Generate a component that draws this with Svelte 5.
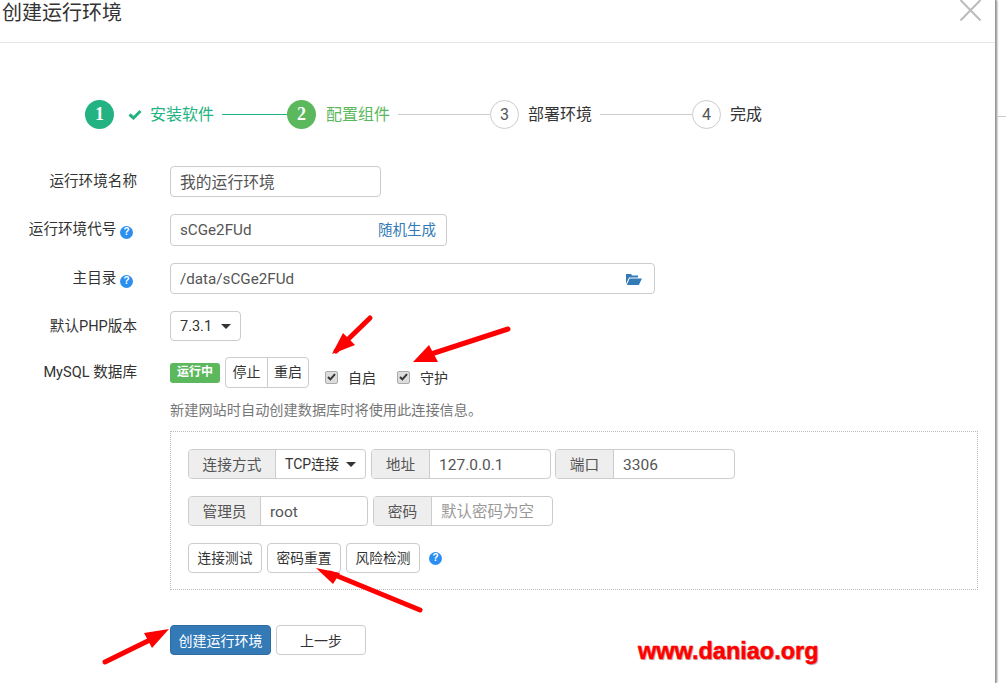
<script>
  const steps = [
    { num: 1, label: "安装软件", state: "done" },
    { num: 2, label: "配置组件", state: "active" },
    { num: 3, label: "部署环境", state: "todo" },
    { num: 4, label: "完成", state: "todo" }
  ];

  // red annotation arrows drawn on top of the screenshot
  const arrows = [
    { tail: "370,318 336,351", head: "332,354 343,333 355,345" },
    { tail: "508,329 425,356", head: "413,362 429,345 438,362" },
    { tail: "420,610 330,573", head: "316,568 340,573 333,584" },
    { tail: "105,662 158,636", head: "169,629 144,633 152,648" }
  ];
</script>

<div class="modal">
  <header>
    <h1>创建运行环境</h1>
    <svg class="close" width="21" height="21" viewBox="0 0 21 21">
      <path d="M0.5 0 L20.5 20.5 M20.5 0 L0.5 20.5" />
    </svg>
  </header>

  <div class="steps">
    {#each steps as step, i}
      <span class="circle {step.state}">{step.num}</span>
      {#if step.state === "done"}
        <svg class="tick" width="14" height="11" viewBox="0 0 14 11">
          <path d="M1.5 5.5 L5.5 9 L12.5 2" />
        </svg>
      {/if}
      <span class="step-label {step.state}">{step.label}</span>
      {#if i < steps.length - 1}
        <span class="line {step.state}"></span>
      {/if}
    {/each}
  </div>

  <form>
    <div class="row name-row">
      <div class="label">运行环境名称</div>
      <div class="box name-input">我的运行环境</div>
    </div>

    <div class="row code-row">
      <div class="label">运行环境代号 <span class="help">?</span></div>
      <div class="box code-input">
        <span class="latin">sCGe2FUd</span>
        <span class="link">随机生成</span>
      </div>
    </div>

    <div class="row dir-row">
      <div class="label">主目录 <span class="help">?</span></div>
      <div class="box dir-input">
        <span class="latin">/data/sCGe2FUd</span>
        <svg width="16" height="13" viewBox="0 0 16 13">
          <path d="M0 11 V1 H5 L6 2.5 H12 V4.5 H3 Z" />
          <path d="M3.6 5.5 H16 L12.8 12 H0.8 Z" />
        </svg>
      </div>
    </div>

    <div class="row version-row">
      <div class="label">默认PHP版本</div>
      <div class="box version-select">7.3.1 <span class="caret"></span></div>
    </div>

    <div class="row mysql-row">
      <div class="label">MySQL 数据库</div>
      <span class="tag">运行中</span>
      <div class="btn-pair">
        <span>停止</span>
        <span>重启</span>
      </div>
      <label class="check first">
        <span class="checkbox">
          <svg width="9" height="8" viewBox="0 0 9 8"><path d="M1 4 L3.4 6.4 L8 1.2" /></svg>
        </span>
        自启
      </label>
      <label class="check">
        <span class="checkbox">
          <svg width="9" height="8" viewBox="0 0 9 8"><path d="M1 4 L3.4 6.4 L8 1.2" /></svg>
        </span>
        守护
      </label>
    </div>

    <p class="hint">新建网站时自动创建数据库时将使用此连接信息。</p>

    <div class="conn">
      <div class="conn-row">
        <div class="group">
          <span class="addon w87">连接方式</span>
          <span class="field select w91">TCP连接 <span class="caret"></span></span>
        </div>
        <div class="group">
          <span class="addon w58">地址</span>
          <span class="field w122">127.0.0.1</span>
        </div>
        <div class="group port">
          <span class="addon w58">端口</span>
          <span class="field w122">3306</span>
        </div>
      </div>
      <div class="conn-row second">
        <div class="group">
          <span class="addon w72">管理员</span>
          <span class="field w108">root</span>
        </div>
        <div class="group">
          <span class="addon w58">密码</span>
          <span class="field w122 placeholder">默认密码为空</span>
        </div>
      </div>
      <div class="conn-row third">
        <span class="btn">连接测试</span>
        <span class="btn">密码重置</span>
        <span class="btn">风险检测</span>
        <span class="help conn-help">?</span>
      </div>
    </div>

    <div class="actions">
      <span class="primary">创建运行环境</span>
      <span class="back">上一步</span>
    </div>
  </form>
</div>

<div class="backdrop-line"></div>

<svg class="arrows" width="1006" height="683">
  {#each arrows as a}
    <polyline points={a.tail} />
    <polygon points={a.head} />
  {/each}
</svg>

<div class="watermark">www.daniao.org</div>

<style>
  :global(body) {
    background: #fff;
    overflow: hidden;
  }

  .modal {
    width: 996px;
    height: 683px;
    box-sizing: border-box;
    border-right: 1px solid #999;
    box-shadow: 1px 0 2px #888;
    background: #fff;
    color: #333;
    font-family: Roboto, "Noto Sans CJK SC", sans-serif;
    font-size: 14px;
    overflow: hidden;
  }

  header {
    height: 42px;
    border-bottom: 1px solid #e5e5e5;
    display: flex;
    justify-content: space-between;
    padding: 0 14px 0 2px;
  }

  h1 {
    margin: 0;
    padding-top: 1px;
    font-size: 20px;
    font-weight: 400;
    line-height: 24px;
  }

  .close path {
    stroke: #bbb;
    stroke-width: 2;
    fill: none;
  }

  .steps {
    display: flex;
    align-items: center;
    height: 29px;
    margin: 57px 0 0 85px;
    font-size: 16px;
  }

  .circle {
    flex: none;
    width: 29px;
    height: 29px;
    box-sizing: border-box;
    border-radius: 50%;
    border: 1px solid #ccc;
    color: #555;
    display: flex;
    align-items: center;
    justify-content: center;
    font-size: 16px;
  }

  .circle.done,
  .circle.active {
    color: #fff;
    border: none;
    font-family: "Liberation Serif", serif;
    font-weight: 700;
    font-size: 18px;
  }

  .circle.done { background: #23b382; }
  .circle.active { background: #5cb85c; }

  .tick {
    margin-left: 14px;
    margin-right: 8px;
  }

  .tick path {
    stroke: #23b382;
    stroke-width: 3;
    fill: none;
  }

  .step-label {
    margin-left: 9px;
    margin-bottom: 3px;
    white-space: nowrap;
  }

  .step-label.done {
    margin-left: 0;
    color: #23b382;
  }

  .step-label.active {
    margin-left: 10px;
    color: #5cb85c;
  }

  .line {
    height: 1px;
    background: #ccc;
    margin-left: 8px;
    width: 92px;
  }

  .line.done {
    width: 65px;
    background: #23b382;
  }

  form {
    display: block;
    margin-top: 37px;
  }

  .row {
    display: flex;
    align-items: flex-start;
  }

  .label {
    width: 137px;
    flex: none;
    text-align: right;
    margin-right: 33px;
    white-space: nowrap;
    font-size: 14.6px;
    line-height: 30px;
  }

  .box {
    box-sizing: border-box;
    border: 1px solid #ccc;
    border-radius: 4px;
    padding: 1px 9px 0;
    height: 31px;
    line-height: 29px;
    font-size: 15.8px;
    color: #555;
    display: flex;
    align-items: center;
    justify-content: space-between;
  }

  .latin { font-size: 15.2px; }

  .name-input { width: 211px; }

  .code-row { margin-top: 17px; }

  .code-input {
    width: 277px;
    height: 32px;
  }

  .link {
    color: #337ab7;
    font-size: 14.5px;
    margin-right: 1px;
  }

  .dir-row { margin-top: 17px; }

  .dir-input {
    width: 485px;
    padding-right: 12px;
  }

  .dir-input svg path { fill: #337ab7; }

  .version-row { margin-top: 17px; }

  .version-select {
    width: 71px;
    height: 30px;
    font-size: 14.5px;
    color: #333;
  }

  .caret {
    display: inline-block;
    width: 0;
    height: 0;
    border-top: 5px solid #333;
    border-left: 5px solid transparent;
    border-right: 5px solid transparent;
  }

  .help {
    display: inline-flex;
    align-items: center;
    justify-content: center;
    width: 13px;
    height: 13px;
    margin-left: 0;
    margin-right: 4px;
    border-radius: 50%;
    background: #2b8ff0;
    color: #fff;
    font-family: "Liberation Sans", sans-serif;
    font-size: 10px;
    font-weight: 700;
    line-height: 1;
    vertical-align: -1px;
  }

  .mysql-row { margin-top: 16px; }

  .mysql-row .label { line-height: 31px; }

  .tag {
    margin-top: 6px;
    width: 50px;
    height: 20px;
    border-radius: 3px;
    background: #5cb85c;
    color: #fff;
    font-size: 12px;
    font-weight: 700;
    line-height: 19px;
    text-align: center;
  }

  .btn-pair {
    display: flex;
    margin-left: 5px;
    height: 31px;
    box-sizing: border-box;
    border: 1px solid #ccc;
    border-radius: 4px;
    line-height: 29px;
    font-size: 14px;
  }

  .btn-pair span {
    width: 41px;
    text-align: center;
  }

  .btn-pair span + span {
    width: 41px;
    border-left: 1px solid #ccc;
    box-sizing: border-box;
  }

  .check {
    display: flex;
    align-items: center;
    margin-top: 10px;
    margin-left: 21px;
    height: 20px;
    font-size: 14px;
  }

  .check.first { margin-left: 16px; }

  .checkbox {
    box-sizing: border-box;
    width: 13px;
    height: 13px;
    margin-right: 10px;
    border: 1px solid #aaa;
    border-radius: 2px;
    background: #ddd;
    display: flex;
    align-items: center;
    justify-content: center;
  }

  .checkbox path {
    stroke: #333;
    stroke-width: 2;
    fill: none;
  }

  .hint {
    margin: 12px 0 0 170px;
    color: #777;
    font-size: 14.2px;
    line-height: 20px;
  }

  .conn {
    box-sizing: border-box;
    width: 808px;
    height: 159px;
    margin: 11px 0 0 170px;
    padding: 17px;
    border: 1px dotted #bbb;
  }

  .conn-row {
    display: flex;
    gap: 5px;
  }

  .conn-row.second {
    margin-top: 17px;
    font-size: 15px;
  }

  .conn-row.third {
    margin-top: 17px;
    align-items: center;
  }

  .group {
    display: flex;
    height: 30px;
    box-sizing: border-box;
    border: 1px solid #ccc;
    border-radius: 4px;
    overflow: hidden;
  }

  .group.port { margin-left: -1px; }

  .addon {
    box-sizing: border-box;
    background: #eee;
    border-right: 1px solid #ccc;
    color: #555;
    font-size: 14.7px;
    line-height: 30px;
    text-align: center;
  }

  .field {
    box-sizing: border-box;
    padding-left: 9px;
    color: #555;
    font-size: 15.5px;
    line-height: 30px;
  }

  .field.select {
    display: flex;
    align-items: center;
    justify-content: space-between;
    padding-right: 9px;
    color: #333;
    font-size: 14px;
  }

  .placeholder { color: #999; }

  .w58 { width: 58px; }
  .w72 { width: 72px; }
  .w87 { width: 87px; }
  .w91 { width: 89px; }
  .w108 { width: 106px; }
  .w122 { width: 120px; }

  .btn {
    box-sizing: border-box;
    width: 74px;
    height: 30px;
    border: 1px solid #ccc;
    border-radius: 4px;
    line-height: 29px;
    text-align: center;
    white-space: nowrap;
    font-size: 13.7px;
  }

  .conn-help { margin-left: 4px; }

  .actions {
    display: flex;
    gap: 5px;
    margin: 35px 0 0 170px;
    font-size: 14px;
    line-height: 30px;
    text-align: center;
  }

  .primary {
    box-sizing: border-box;
    width: 101px;
    height: 30px;
    border: 1px solid #2e6da4;
    border-radius: 4px;
    background: #337ab7;
    color: #fff;
  }

  .back {
    box-sizing: border-box;
    width: 90px;
    height: 30px;
    border: 1px solid #ccc;
    border-radius: 4px;
  }

  .backdrop-line {
    position: absolute;
    left: 997px;
    top: 116px;
    width: 9px;
    height: 1px;
    background: #ccc;
  }

  .arrows {
    position: absolute;
    left: 0;
    top: 0;
    pointer-events: none;
  }

  .arrows polyline {
    stroke: #f00;
    stroke-width: 5;
    stroke-linecap: round;
    fill: none;
  }

  .arrows polygon { fill: #f00; }

  .watermark {
    position: absolute;
    left: 638px;
    top: 637px;
    color: #f00;
    font-family: "Liberation Sans", sans-serif;
    font-size: 23.5px;
    font-weight: 700;
    line-height: 28px;
    -webkit-text-stroke: 0.5px #f00;
    text-shadow: 1px 1px 1px #aaa;
  }
</style>
